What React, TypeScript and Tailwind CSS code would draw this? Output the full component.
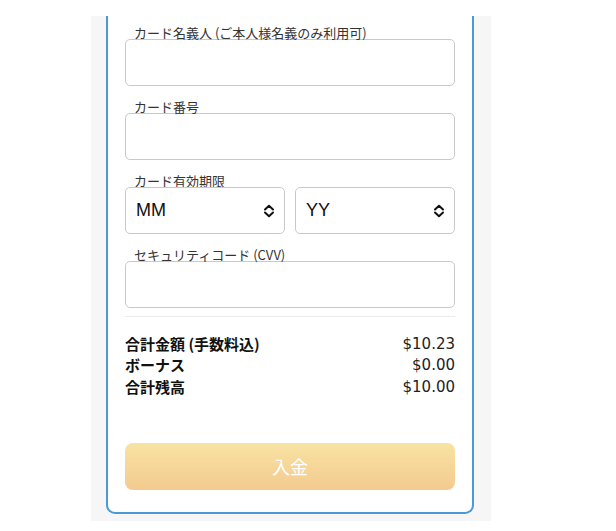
const FONT = "font-['Noto_Sans_CJK_JP',sans-serif]";

const Chevrons = () => (
    <svg width="12" height="14" viewBox="0 0 12 14" fill="none" stroke="#111" strokeWidth="2" strokeLinecap="round" strokeLinejoin="round">
        <path d="M2 5.5 L6 1.8 L10 5.5" />
        <path d="M2 8.5 L6 12.2 L10 8.5" />
    </svg>
);

const Field = ({ label, first }: { label: string; first?: boolean }) => (
    <div className={first ? "" : "mt-[13px]"}>
        <div className="pl-[9px] text-[13px] leading-[16px] text-[#333] mb-[-2px]">{label}</div>
        <div className="h-[47px] rounded-[5px] border border-[#c9c9c9] bg-white" />
    </div>
);

const SelectBox = ({ value }: { value: string }) => (
    <div className="flex-1 h-[47px] rounded-[5px] border border-[#c9c9c9] bg-white flex items-center justify-between pl-[10px] pr-[9px]">
        <span className="font-['Liberation_Sans',sans-serif] text-[18px] text-[#111]">{value}</span>
        <Chevrons />
    </div>
);

const Row = ({ label, value }: { label: string; value: string }) => (
    <div className="flex justify-between items-center h-[21.5px]">
        <span className="text-[15px] font-bold text-[#111]">{label}</span>
        <span className="font-['DejaVu_Sans',sans-serif] text-[15px] text-[#222]">{value}</span>
    </div>
);

export default function App() {
    return (
        <div className={`w-[616px] h-[531px] bg-white pt-4 pl-[91px] ${FONT}`}>
            <div className="w-[400px] h-[505px] bg-[#f6f6f6] pl-[15px] pr-[17px]">
                <div className="h-[498px] bg-white border-x-2 border-b-2 border-[#4a9ad8] rounded-b-[9px] pt-[9px] px-[17px]">
                    <Field label="カード名義人 (ご本人様名義のみ利用可)" first />
                    <Field label="カード番号" />
                    <div className="mt-[13px]">
                        <div className="pl-[9px] text-[13px] leading-[16px] text-[#333] mb-[-2px]">カード有効期限</div>
                        <div className="flex gap-[10px]">
                            <SelectBox value="MM" />
                            <SelectBox value="YY" />
                        </div>
                    </div>
                    <Field label="セキュリティコード (CVV)" />
                    <div className="mt-[8px] border-t border-[#ebebeb]" />
                    <div className="mt-[16px]">
                        <Row label="合計金額 (手数料込)" value="$10.23" />
                        <Row label="ボーナス" value="$0.00" />
                        <Row label="合計残高" value="$10.00" />
                    </div>
                    <button className="mt-[45.5px] w-full h-[47px] rounded-[8px] bg-gradient-to-b from-[#f8e3a3] to-[#f3ca8f] text-white text-[18px]">
                        入金
                    </button>
                </div>
            </div>
        </div>
    );
}
